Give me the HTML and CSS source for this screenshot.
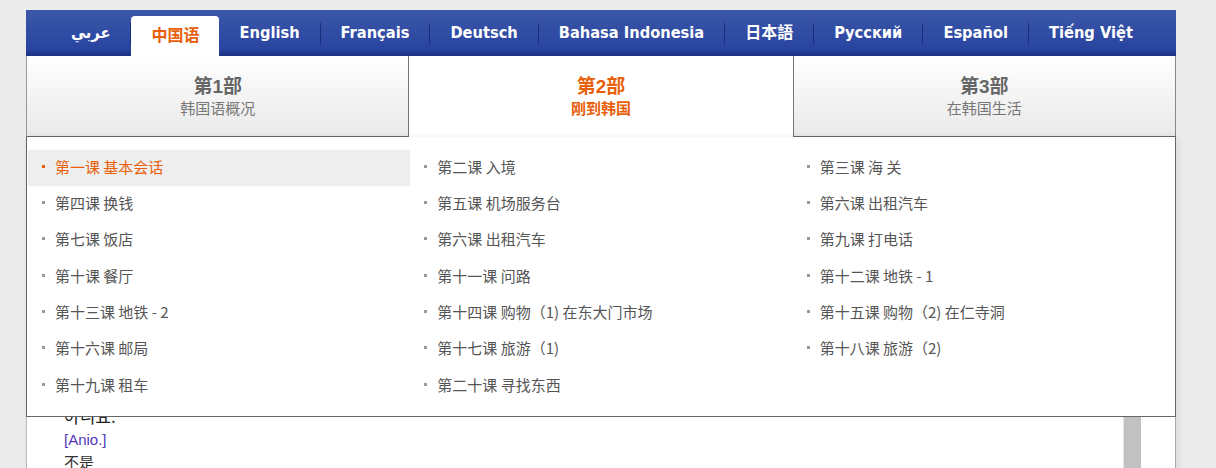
FILE: index.html
```html
<!DOCTYPE html>
<html lang="zh">

<head>
    <meta charset="UTF-8">
    <meta name="viewport" content="width=device-width, initial-scale=1.0">
    <title>韩国语 - 刚到韩国</title>
    <link rel="stylesheet" href="styles.css">
</head>

<body>
    <div class="wrap">
        <ul class="langs">
            <li class="lang">عربي</li>
            <li class="sep"></li>
            <li class="lang cjk active">中国语</li>
            <li class="lang">English</li>
            <li class="sep"></li>
            <li class="lang">Français</li>
            <li class="sep"></li>
            <li class="lang">Deutsch</li>
            <li class="sep"></li>
            <li class="lang">Bahasa Indonesia</li>
            <li class="sep"></li>
            <li class="lang cjk">日本語</li>
            <li class="sep"></li>
            <li class="lang">Русский</li>
            <li class="sep"></li>
            <li class="lang">Español</li>
            <li class="sep"></li>
            <li class="lang">Tiếng Việt</li>
        </ul>

        <div class="parts">
            <div class="part">
                <div class="part-title">第1部</div>
                <div class="part-sub">韩国语概况</div>
            </div>
            <div class="part current">
                <div class="part-title">第2部</div>
                <div class="part-sub">刚到韩国</div>
            </div>
            <div class="part">
                <div class="part-title">第3部</div>
                <div class="part-sub">在韩国生活</div>
            </div>
        </div>

        <div class="stage">
            <!-- lesson page under the dropdown -->
            <div class="content">
                <div class="text">
                    <p class="ko">아니요.</p>
                    <p class="roman">[Anio.]</p>
                    <p class="zh">不是</p>
                </div>
                <div class="scroll"></div>
            </div>

            <!-- dropdown of lessons -->
            <ul class="lessons">
                <li class="lesson on">第一课 基本会话</li>
                <li class="lesson">第二课 入境</li>
                <li class="lesson">第三课 海 关</li>
                <li class="lesson">第四课 换钱</li>
                <li class="lesson">第五课 机场服务台</li>
                <li class="lesson">第六课 出租汽车</li>
                <li class="lesson">第七课 饭店</li>
                <li class="lesson">第六课 出租汽车</li>
                <li class="lesson">第九课 打电话</li>
                <li class="lesson">第十课 餐厅</li>
                <li class="lesson">第十一课 问路</li>
                <li class="lesson">第十二课 地铁 - 1</li>
                <li class="lesson">第十三课 地铁 - 2</li>
                <li class="lesson">第十四课 购物（1) 在东大门市场</li>
                <li class="lesson">第十五课 购物（2) 在仁寺洞</li>
                <li class="lesson">第十六课 邮局</li>
                <li class="lesson">第十七课 旅游（1)</li>
                <li class="lesson">第十八课 旅游（2)</li>
                <li class="lesson">第十九课 租车</li>
                <li class="lesson">第二十课 寻找东西</li>
            </ul>
        </div>
    </div>
</body>

</html>
```

FILE: styles.css
```css
body {
    margin: 0;
    padding: 0;
    background-color: #ebebeb;
    font-family: "Noto Sans CJK SC", sans-serif;
    overflow: hidden;
}

ul {
    list-style: none;
    margin: 0;
    padding: 0;
}

.wrap {
    width: 1150px;
    margin: 10px 0 0 26px;
}

/* language bar */
.langs {
    display: flex;
    align-items: flex-end;
    height: 46px;
    padding-left: 25px;
    background: linear-gradient(#3c58a8, #2844a0 85%, #1c3282);
}

.lang {
    height: 40px;
    line-height: 34px;
    padding: 0 20px;
    color: #ffffff;
    font-family: "DejaVu Sans Condensed", "DejaVu Sans", "Noto Sans CJK SC", sans-serif;
    font-stretch: condensed;
    font-size: 16.3px;
    font-weight: bold;
    white-space: nowrap;
}

.lang.cjk {
    font-family: "Noto Sans CJK SC", sans-serif;
    font-size: 16px;
    line-height: 30px;
}

.lang.active {
    background-color: #ffffff;
    color: #e8600a;
    border-radius: 4px 4px 0 0;
    line-height: 36px;
}

.sep {
    width: 1px;
    height: 22px;
    margin-bottom: 11px;
    background-color: #1a2f7c;
}

/* part tabs */
.parts {
    display: grid;
    grid-template-columns: repeat(3, 1fr);
}

.part {
    height: 79px;
    padding-top: 1px;
    text-align: center;
    background: linear-gradient(#ffffff, #e9e9e9);
    border-left: 1px solid #999999;
    border-right: 1px solid #888888;
    border-bottom: 1px solid #666666;
    color: #666666;
}

.part:first-child {
    border-right-color: #777777;
}

.part:last-child {
    border-left-color: #777777;
}

.part.current {
    background: #ffffff;
    border: none;
    height: 80px;
    color: #e8600a;
}

.part-title {
    margin-top: 19px;
    line-height: 22px;
    font-family: "Liberation Sans", "Noto Sans CJK SC", sans-serif;
    font-size: 19px;
    font-weight: bold;
}

.part-sub {
    line-height: 20px;
    font-size: 15px;
    color: #777777;
}

.part.current .part-sub {
    color: #e8600a;
    font-weight: bold;
}

/* page under the menu */
.stage {
    position: relative;
}

.content {
    display: flex;
    height: 340px;
    background-color: #ffffff;
    border-left: 1px solid #bbbbbb;
    border-right: 1px solid #aaaaaa;
    box-shadow: 2px 0 6px rgba(0, 0, 0, 0.08);
}

.text {
    flex: 1;
    padding: 266px 0 0 37px;
}

.text p {
    margin: 0;
    font-size: 15px;
    line-height: 22px;
}

.text .ko {
    color: #222222;
    font-size: 17px;
    line-height: 26px;
    font-family: "Noto Sans CJK KR", sans-serif;
}

.roman {
    color: #5137b8;
    font-family: "Liberation Sans", sans-serif;
}

.zh {
    color: #333333;
}

.scroll {
    width: 17px;
    margin-right: 34px;
    background-color: #c1c1c1;
    border-left: 1px solid #e4e4e4;
}

/* lessons dropdown */
.lessons {
    position: absolute;
    top: 0;
    left: 0;
    right: 0;
    display: grid;
    grid-template-columns: repeat(3, 1fr);
    grid-auto-rows: 36.33px;
    padding: 13px 0 12px 1px;
    background-color: #ffffff;
    border: 1px solid #666666;
    border-top: none;
}

.lesson {
    display: flex;
    align-items: center;
    padding: 0 0 4px 14px;
    color: #555555;
    font-size: 15px;
    white-space: nowrap;
}

.lesson::before {
    content: "";
    width: 3px;
    height: 3px;
    margin-right: 10px;
    background-color: #999999;
}

.lesson.on {
    background-color: #eeeeee;
    color: #e8600a;
}

.lesson.on::before {
    background-color: #e8600a;
}
```
